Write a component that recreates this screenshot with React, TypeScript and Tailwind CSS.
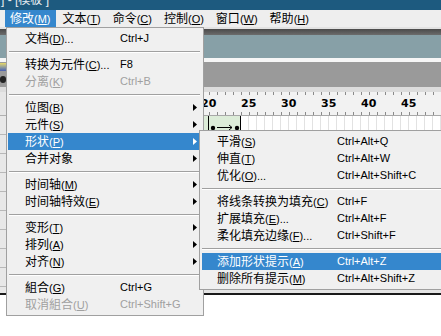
import React from "react";

type Entry =
  | { sep: true }
  | {
      sep?: false;
      zh: string;
      k?: string;
      dots?: boolean;
      sc?: string;
      sub?: boolean;
      off?: boolean;
      on?: boolean;
    };

const SEP: Entry = { sep: true };

const mainItems: Entry[] = [
  { zh: "文档", k: "D", dots: true, sc: "Ctrl+J" },
  SEP,
  { zh: "转换为元件", k: "C", dots: true, sc: "F8" },
  { zh: "分离", k: "K", sc: "Ctrl+B", off: true },
  SEP,
  { zh: "位图", k: "B", sub: true },
  { zh: "元件", k: "S", sub: true },
  { zh: "形状", k: "P", sub: true, on: true },
  { zh: "合并对象", sub: true },
  SEP,
  { zh: "时间轴", k: "M", sub: true },
  { zh: "时间轴特效", k: "E", sub: true },
  SEP,
  { zh: "变形", k: "T", sub: true },
  { zh: "排列", k: "A", sub: true },
  { zh: "对齐", k: "N", sub: true },
  SEP,
  { zh: "組合", k: "G", sc: "Ctrl+G" },
  { zh: "取消組合", k: "U", sc: "Ctrl+Shift+G", off: true },
];

const shapeItems: Entry[] = [
  { zh: "平滑", k: "S", sc: "Ctrl+Alt+Q" },
  { zh: "伸直", k: "T", sc: "Ctrl+Alt+W" },
  { zh: "优化", k: "O", dots: true, sc: "Ctrl+Alt+Shift+C" },
  SEP,
  { zh: "将线条转换为填充", k: "C", sc: "Ctrl+F" },
  { zh: "扩展填充", k: "E", dots: true, sc: "Ctrl+Alt+F" },
  { zh: "柔化填充边缘", k: "F", dots: true, sc: "Ctrl+Shift+F" },
  SEP,
  { zh: "添加形状提示", k: "A", sc: "Ctrl+Alt+Z", on: true },
  { zh: "删除所有提示", k: "M", sc: "Ctrl+Alt+Shift+Z" },
];

const menuBar = [
  { zh: "修改", k: "M", on: true },
  { zh: "文本", k: "T" },
  { zh: "命令", k: "C" },
  { zh: "控制", k: "O" },
  { zh: "窗口", k: "W" },
  { zh: "帮助", k: "H" },
];

function Label({ zh, k, dots }: { zh: string; k?: string; dots?: boolean }) {
  return (
    <span className="whitespace-nowrap">
      <span className="text-[12px]">{zh}</span>
      {k && (
        <span className="text-[11px]">
          (<u className="underline-offset-1">{k}</u>)
        </span>
      )}
      {dots && <span className="text-[11px]">...</span>}
    </span>
  );
}

function Menu({ items, sub }: { items: Entry[]; sub?: boolean }) {
  return (
    <div className="flex flex-col">
      {items.map((it, i) => {
        if (it.sep)
          return (
            <div key={i} className={`flex h-[9px] items-center ${sub ? "mx-[2px]" : "mx-[2px] mr-[3px]"}`}>
              <div className="w-full border-t border-b border-t-[#a0a0a0] border-b-white" />
            </div>
          );
        const color = it.on ? "bg-[#3587cd] text-white" : it.off ? "text-[#a0a0a0]" : "text-black";
        return (
          <div
            key={i}
            className={`flex h-[17px] items-center leading-[17px] ${sub ? "mx-[2px] pl-[15px]" : "mx-[1px] pl-[17px] pr-[5px]"} ${color}`}
          >
            <div className={`shrink-0 ${sub ? "w-[120px]" : "w-[95px]"}`}>
              <Label zh={it.zh} k={it.k} dots={it.dots} />
            </div>
            {it.sc && <span className="whitespace-nowrap text-[11px]">{it.sc}</span>}
            {it.sub && (
              <svg width="4" height="7" viewBox="0 0 4 7" className="ml-auto">
                <path d="M0 0 L4 3.5 L0 7 Z" fill={it.on ? "#fff" : "#000"} />
              </svg>
            )}
          </div>
        );
      })}
    </div>
  );
}

const frames = Array.from({ length: 30 }, (_, i) => 20 + i);

export default function App() {
  return (
    <div className="relative h-[336px] w-[441px] overflow-hidden bg-white font-['Liberation_Sans','Noto_Sans_CJK_SC',sans-serif]">
      {/* title bar */}
      <div className="h-[10px] overflow-hidden bg-[#1d5a7f]">
        <div className="-mt-[8px] pl-[1px] text-[12px] leading-[17px] whitespace-nowrap text-[#e8eef2]">
          ] - [模板 ]
        </div>
      </div>

      {/* menu bar */}
      <div className="flex h-[17px] gap-[2px] bg-[#eeeeee] pl-[5px]">
        {menuBar.map((m) => (
          <div
            key={m.zh}
            className={`flex h-[17px] items-center px-[5px] leading-[17px] ${m.on ? "bg-[#3587cd] text-white" : "text-black"}`}
          >
            <Label zh={m.zh} k={m.k} />
          </div>
        ))}
      </div>

      {/* panels under the menus */}
      <div className="h-[2px] bg-[#e2e2e2]" />
      <div className="h-[6px] bg-gradient-to-b from-[#4a4a4a] to-[#6c6c6c]" />
      <div className="h-[23px] bg-[#87a0a7]" />
      <div className="h-[4px] bg-[#f6f6f6]" />
      <div className="flex h-[25px] bg-[#9a9a9a]">
        <div className="flex w-[6px] flex-col gap-[5px] pt-[1px]">
          <div className="h-[8px] w-[6px] bg-gradient-to-b from-[#e8d860] to-[#4a5fb0]" />
          <div className="h-[7px] w-[6px] rounded-full bg-[#222]" />
        </div>
      </div>
      <div className="h-[5px] bg-[#dcdcdc]" />

      {/* ruler */}
      <div className="flex h-[24px]">
        <div className="w-[202px] border-b border-[#b0b0b0] bg-[#e6e6e6]" />
        <div className="flex flex-col border-b border-[#a8a8a8] bg-[#f2f2f2]">
          <div className="flex h-[3px]">
            {frames.map((f) => (
              <div key={f} className="h-[3px] w-[8px] border-l border-[#8a8a8a]" />
            ))}
          </div>
          <div className="flex h-[17px] items-center">
            {[20, 25, 30, 35, 40, 45].map((n) => (
              <div
                key={n}
                className="w-[40px] font-['DejaVu_Sans',sans-serif] text-[11px] leading-[17px] font-bold text-black"
              >
                {n}
              </div>
            ))}
          </div>
          <div className="flex h-[3px]">
            {frames.map((f) => (
              <div key={f} className="h-[3px] w-[8px] border-l border-[#8a8a8a]" />
            ))}
          </div>
        </div>
      </div>

      {/* layers + frames */}
      <div className="flex h-[177px]">
        <div className="flex w-[202px] flex-col bg-[#e8e8e8]">
          {Array.from({ length: 9 }, (_, i) => (
            <div key={i} className="h-[19px] border-b border-[#b8b8b8]" />
          ))}
        </div>
        <div className="flex flex-col bg-[#e4e4e4]">
          <div className="flex h-[18px] bg-white">
            <svg width="40" height="18" viewBox="0 0 40 18" className="shrink-0">
              <rect x="0" y="0" width="40" height="18" fill="#dcecd8" />
              <path d="M0 9 L3 11 L0 13" stroke="#000" fill="none" />
              <line x1="7.5" y1="0" x2="7.5" y2="18" stroke="#000" />
              <line x1="39.5" y1="0" x2="39.5" y2="18" stroke="#000" />
              <circle cx="12" cy="12" r="2.2" fill="#000" />
              <circle cx="36" cy="12" r="2.2" fill="#000" />
              <line x1="16" y1="11.5" x2="31" y2="11.5" stroke="#000" />
              <path d="M28 9 L31 11.5 L28 14" stroke="#000" fill="none" />
            </svg>
            {frames.slice(5).map((f) => (
              <div key={f} className="h-[18px] w-[8px] shrink-0 border-r border-[#e2e2e2]" />
            ))}
          </div>
        </div>
      </div>
      <div className="h-[2px] bg-[#1a1a1a]" />

      {/* 修改 menu */}
      <div className="absolute top-[27px] left-[6px] w-[198px] border border-[#a0a0a0] bg-[#f0f0f0] py-[2px]">
        <Menu items={mainItems} />
      </div>

      {/* 形状 submenu */}
      <div className="absolute top-[130px] left-[199px] w-[250px] border border-[#a0a0a0] bg-[#f0f0f0] pt-[2px] pb-[2px]">
        <Menu items={shapeItems} sub />
      </div>
    </div>
  );
}
